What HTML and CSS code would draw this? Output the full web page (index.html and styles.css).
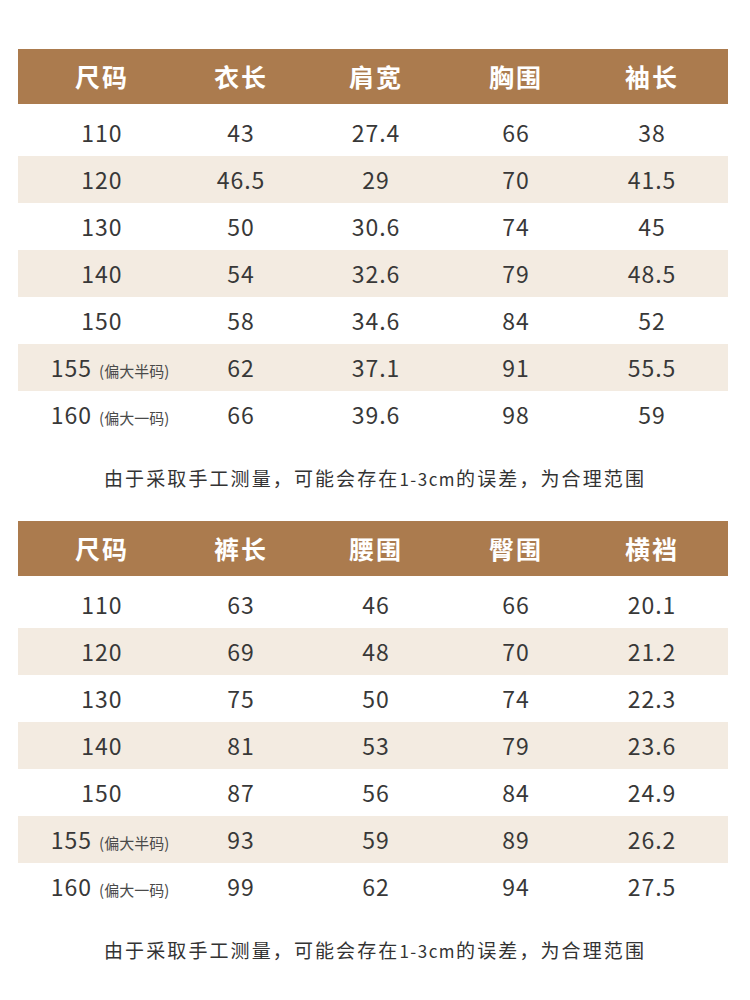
FILE: index.html
```html
<!DOCTYPE html>
<html lang="zh-CN">
<head>
<meta charset="utf-8">
<title>尺码表</title>
<link rel="stylesheet" href="styles.css">
</head>
<body>
<div class="page">
  <div class="table">
    <div class="row head"><div>尺码</div><div>衣长</div><div>肩宽</div><div>胸围</div><div>袖长</div></div>
    <div class="row"><div>110</div><div>43</div><div>27.4</div><div>66</div><div>38</div></div>
    <div class="row alt"><div>120</div><div>46.5</div><div>29</div><div>70</div><div>41.5</div></div>
    <div class="row"><div>130</div><div>50</div><div>30.6</div><div>74</div><div>45</div></div>
    <div class="row alt"><div>140</div><div>54</div><div>32.6</div><div>79</div><div>48.5</div></div>
    <div class="row"><div>150</div><div>58</div><div>34.6</div><div>84</div><div>52</div></div>
    <div class="row alt"><div class="size">155<span class="note">(偏大半码)</span></div><div>62</div><div>37.1</div><div>91</div><div>55.5</div></div>
    <div class="row"><div class="size">160<span class="note">(偏大一码)</span></div><div>66</div><div>39.6</div><div>98</div><div>59</div></div>
  </div>
  <p class="caption">由于采取手工测量，可能会存在<span class="latin">1-3cm</span>的误差，为合理范围</p>

  <div class="table">
    <div class="row head"><div>尺码</div><div>裤长</div><div>腰围</div><div>臀围</div><div>横裆</div></div>
    <div class="row"><div>110</div><div>63</div><div>46</div><div>66</div><div>20.1</div></div>
    <div class="row alt"><div>120</div><div>69</div><div>48</div><div>70</div><div>21.2</div></div>
    <div class="row"><div>130</div><div>75</div><div>50</div><div>74</div><div>22.3</div></div>
    <div class="row alt"><div>140</div><div>81</div><div>53</div><div>79</div><div>23.6</div></div>
    <div class="row"><div>150</div><div>87</div><div>56</div><div>84</div><div>24.9</div></div>
    <div class="row alt"><div class="size">155<span class="note">(偏大半码)</span></div><div>93</div><div>59</div><div>89</div><div>26.2</div></div>
    <div class="row"><div class="size">160<span class="note">(偏大一码)</span></div><div>99</div><div>62</div><div>94</div><div>27.5</div></div>
  </div>
  <p class="caption">由于采取手工测量，可能会存在<span class="latin">1-3cm</span>的误差，为合理范围</p>
</div>
</body>
</html>
```
FILE: styles.css
```css
html, body {
  margin: 0;
  padding: 0;
  background: #ffffff;
}

.page {
  padding-top: 49px;
  font-family: "Noto Sans CJK SC", "Noto Sans", sans-serif;
  color: #383838;
}

.table {
  margin-left: 18px;
  width: 710px;
}

.row {
  display: grid;
  grid-template-columns: 168px 110px 160px 120px 152px;
  height: 47px;
  align-items: center;
  font-size: 23px;
  line-height: 1;
  letter-spacing: 1px;
}

.row > div {
  text-align: center;
  white-space: nowrap;
}

.row.head {
  height: 55px;
  margin-bottom: 5px;
  background: #ab7b4e;
  color: #ffffff;
  font-size: 25px;
  font-weight: 700;
  letter-spacing: 2px;
}

.row.alt {
  background: #f3ebe1;
}

.size {
  padding-left: 16px;
}

.note {
  margin-left: 7px;
  font-size: 15px;
  letter-spacing: 0;
  color: #4a4a4a;
}

.caption {
  margin: 28px 0 31px 0;
  height: 24px;
  line-height: 24px;
  text-align: center;
  font-size: 19px;
  letter-spacing: 2.1px;
  color: #333333;
}

.caption .latin {
  font-size: 17px;
  letter-spacing: 1.5px;
}
```
